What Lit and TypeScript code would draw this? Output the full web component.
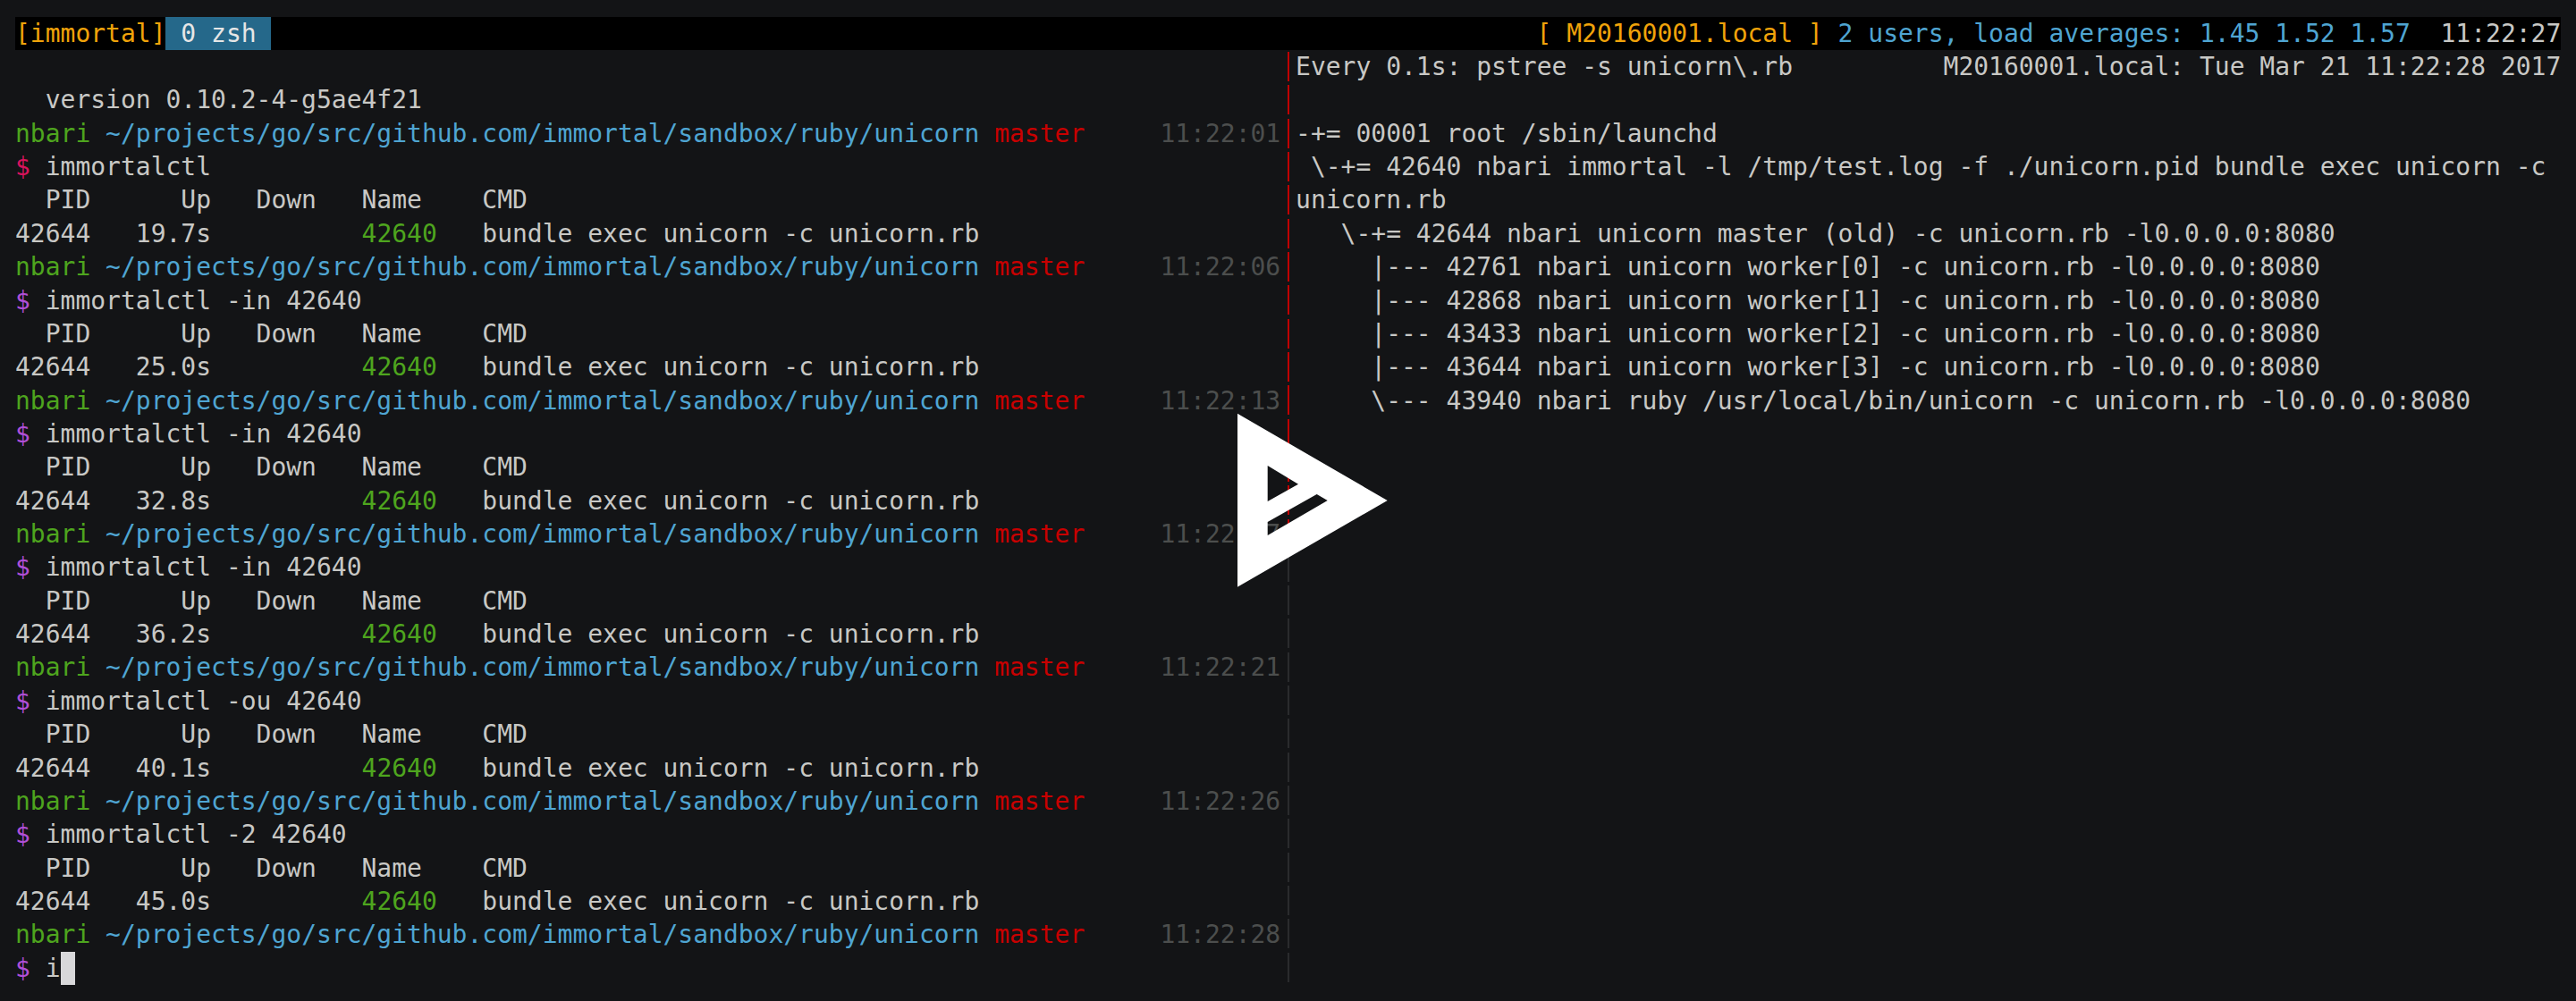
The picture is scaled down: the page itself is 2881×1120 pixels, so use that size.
import { LitElement, html, css } from "lit";
import { customElement } from "lit/decorators.js";

const PATH = "~/projects/go/src/github.com/immortal/sandbox/ruby/unicorn";

const blocks = [
  { time: "11:22:01", cmd: "immortalctl", up: "19.7s", first: true },
  { time: "11:22:06", cmd: "immortalctl -in 42640", up: "25.0s" },
  { time: "11:22:13", cmd: "immortalctl -in 42640", up: "32.8s" },
  { time: "11:22:17", cmd: "immortalctl -in 42640", up: "36.2s" },
  { time: "11:22:21", cmd: "immortalctl -ou 42640", up: "40.1s" },
  { time: "11:22:26", cmd: "immortalctl -2 42640", up: "45.0s" },
];

const watchLines = [
  "Every 0.1s: pstree -s unicorn\\.rb          M20160001.local: Tue Mar 21 11:22:28 2017",
  "",
  "-+= 00001 root /sbin/launchd",
  " \\-+= 42640 nbari immortal -l /tmp/test.log -f ./unicorn.pid bundle exec unicorn -c",
  "unicorn.rb",
  "   \\-+= 42644 nbari unicorn master (old) -c unicorn.rb -l0.0.0.0:8080",
  "     |--- 42761 nbari unicorn worker[0] -c unicorn.rb -l0.0.0.0:8080",
  "     |--- 42868 nbari unicorn worker[1] -c unicorn.rb -l0.0.0.0:8080",
  "     |--- 43433 nbari unicorn worker[2] -c unicorn.rb -l0.0.0.0:8080",
  "     |--- 43644 nbari unicorn worker[3] -c unicorn.rb -l0.0.0.0:8080",
  "     \\--- 43940 nbari ruby /usr/local/bin/unicorn -c unicorn.rb -l0.0.0.0:8080",
];

const ROWS = 28;
const RED_ROWS = 15;

@customElement("app-root")
export class AppRoot extends LitElement {
  static styles = css`
    :host {
      display: block;
      position: relative;
      width: 2881px;
      height: 1120px;
      overflow: hidden;
      background: #131416;
      color: #c8c8c5;
      font-family: "DejaVu Sans Mono", monospace;
      font-size: 27.99px;
      line-height: 37.36px;
    }
    .term {
      padding: 18.68px 0 0 17px;
    }
    .status {
      display: flex;
      justify-content: space-between;
      width: 169ch;
      height: 37.32px;
      line-height: 37.32px;
      background: #000;
      white-space: pre;
    }
    .status-left {
      display: flex;
    }
    .session {
      color: #f0a30a;
    }
    .window {
      background: #25688a;
      color: #e6e6e6;
    }
    .panes {
      display: grid;
      grid-template-columns: 84ch 1ch 84ch;
    }
    .pane {
      display: flex;
      flex-direction: column;
    }
    .row {
      display: flex;
      justify-content: space-between;
      height: 37.36px;
      white-space: pre;
    }
    .divider {
      display: flex;
      flex-direction: column;
      align-items: center;
    }
    .seg {
      height: 37.32px;
      display: flex;
      align-items: center;
    }
    .seg::before {
      content: "";
      width: 2px;
      height: 33px;
    }
    .seg.active::before {
      background: #c00000;
    }
    .seg.idle::before {
      background: #2a2b2d;
    }
    .green {
      color: #4ea51e;
    }
    .blue {
      color: #4fa5d2;
    }
    .red {
      color: #c80000;
    }
    .first-dollar {
      color: #d8135c;
    }
    .dollar {
      color: #b04fd8;
    }
    .time {
      color: #4c4e4d;
    }
    .cursor {
      display: inline-block;
      width: 1ch;
      height: 37.36px;
      background: #d8d8da;
      vertical-align: top;
    }
    .logo {
      position: absolute;
      left: 1384px;
      top: 462px;
      width: 168px;
      height: 195px;
    }
  `;

  private prompt(time: string) {
    return html`<div class="row">
      <span><span class="green">nbari</span> <span class="blue">${PATH}</span> <span class="red">master</span></span>
      <span class="time">${time}</span>
    </div>`;
  }

  private block(b: (typeof blocks)[number]) {
    return html`
      ${this.prompt(b.time)}
      <div class="row"><span><span class=${b.first ? "first-dollar" : "dollar"}>$</span> ${b.cmd}</span></div>
      <div class="row"><span>  PID      Up   Down   Name    CMD</span></div>
      <div class="row"><span>42644   ${b.up}          <span class="green">42640</span>   bundle exec unicorn -c unicorn.rb</span></div>
    `;
  }

  render() {
    return html`
      <div class="term">
        <div class="status">
          <div class="status-left"><span class="session">[immortal]</span><span class="window"> 0 zsh </span></div>
          <div><span class="session">[ M20160001.local ]</span> <span class="blue">2 users, load averages: 1.45 1.52 1.57</span>  11:22:27</div>
        </div>
        <div class="panes">
          <div class="pane">
            <div class="row"><span> </span></div>
            <div class="row"><span>  version 0.10.2-4-g5ae4f21</span></div>
            ${blocks.map((b) => this.block(b))}
            ${this.prompt("11:22:28")}
            <div class="row"><span><span class="dollar">$</span> i<span class="cursor"></span></span></div>
          </div>
          <div class="divider">
            ${Array.from({ length: ROWS }, (_, i) => html`<div class="seg ${i < RED_ROWS ? "active" : "idle"}"></div>`)}
          </div>
          <div class="pane">
            ${watchLines.map((l) => html`<div class="row"><span>${l || " "}</span></div>`)}
          </div>
        </div>
      </div>
      <svg class="logo" viewBox="1384 462 168 195" aria-hidden="true">
        <path
          fill="#fff"
          fill-rule="evenodd"
          d="M1384 462.7 L1551.7 560 L1384 656.7 Z M1417.7 521 L1417.7 561 L1452 541.7 Z M1417.7 584 L1417.7 599 L1484.7 560 L1472.7 553 Z"
        />
      </svg>
    `;
  }
}
